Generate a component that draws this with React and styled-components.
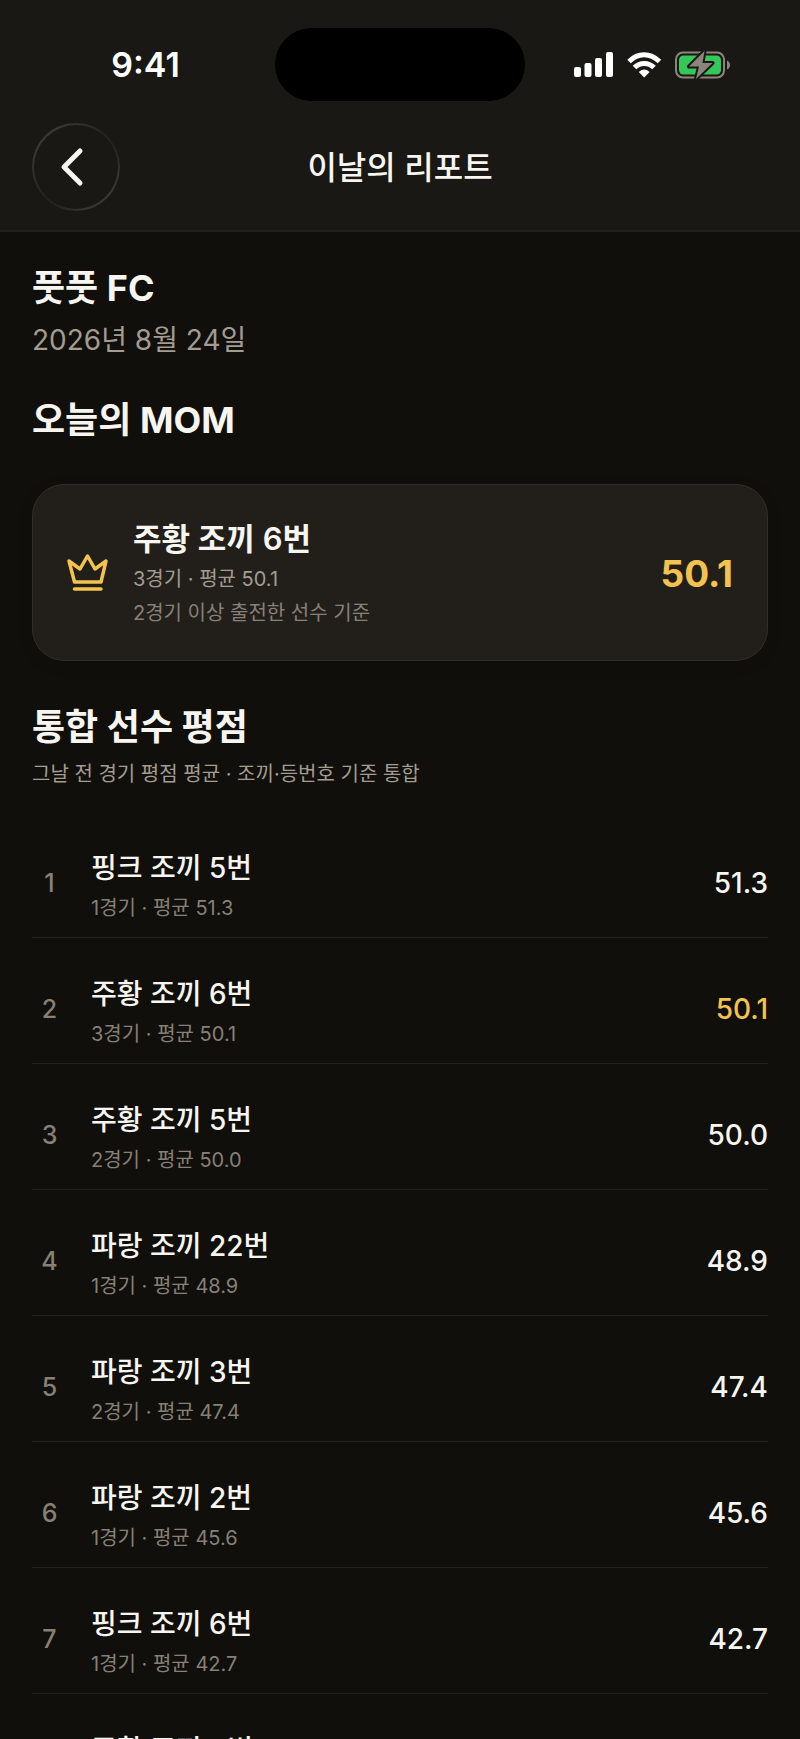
import React from 'react';
import styled, { createGlobalStyle } from 'styled-components';

const players = [
  { name: '핑크 조끼 5번', games: 1, score: '51.3' },
  { name: '주황 조끼 6번', games: 3, score: '50.1', mom: true },
  { name: '주황 조끼 5번', games: 2, score: '50.0' },
  { name: '파랑 조끼 22번', games: 1, score: '48.9' },
  { name: '파랑 조끼 3번', games: 2, score: '47.4' },
  { name: '파랑 조끼 2번', games: 1, score: '45.6' },
  { name: '핑크 조끼 6번', games: 1, score: '42.7' },
  { name: '주황 조끼 4번', games: 1, score: '42.1' },
];

const StatusIcons = () => (
  <Icons viewBox="0 0 160 30" aria-hidden="true">
    <g fill="#fff">
      <rect x="2" y="17" width="7" height="10" rx="2" />
      <rect x="12.500" y="13" width="7" height="14" rx="2" />
      <rect x="23" y="8" width="7" height="19" rx="2" />
      <rect x="34" y="2" width="7" height="25" rx="2" />
    </g>
    <g fill="none" stroke="#fff" strokeWidth="5">
      <path d="M57 11.500 C66 2.500 78 2.500 87.500 11.500" />
      <path d="M62.500 17.500 C68 12 76.500 12 82 17.500" />
    </g>
    <path d="M72.200 27.500 L66.800 22 Q72.200 17.200 77.600 22 Z" fill="#fff" />
    <rect x="104" y="2.500" width="48" height="25" rx="7" fill="none" stroke="#8d857b" strokeWidth="2" />
    <rect x="107" y="5.500" width="42" height="19" rx="4.500" fill="#34c759" />
    <path d="M155 10.500 Q158 12 158 15 Q158 18 155 19.500 Z" fill="#8d857b" />
    <path
      d="M132.500 1 L117 16.500 H127 L124 29 L140.500 13 H130.500 Z"
      fill="#8d857b"
      stroke="#191814"
      strokeWidth="4"
      strokeLinejoin="round"
      paintOrder="stroke"
    />
  </Icons>
);

const App = () => {
  return (
    <Page>
      <GlobalStyle />
      <Header>
        <StatusBar>
          <Time>9:41</Time>
          <Island />
          <StatusIcons />
        </StatusBar>
        <NavBar>
          <BackButton type="button" aria-label="뒤로">
            <svg width="26" height="40" viewBox="0 0 26 40" fill="none">
              <path d="M21 4 L5 20 L21 36" stroke="#f7f5ef" strokeWidth="5" strokeLinecap="round" strokeLinejoin="round" />
            </svg>
          </BackButton>
          <NavTitle>이날의 리포트</NavTitle>
        </NavBar>
      </Header>
      <Content>
        <Heading>풋풋 FC</Heading>
        <DateText>2026년 8월 24일</DateText>
        <Section>
          <Heading>오늘의 MOM</Heading>
          <MomCard>
            <CrownIcon viewBox="0 0 44 44" aria-hidden="true">
              <path d="M4 10 L15 18 L22.500 5 L30 18 L41 10 L36 31 H9.500 Z" />
              <path d="M9.500 38 H36" />
            </CrownIcon>
            <Info>
              <MomName>주황 조끼 6번</MomName>
              <Caption $tone="light">3경기 · 평균 50.1</Caption>
              <Caption>2경기 이상 출전한 선수 기준</Caption>
            </Info>
            <MomScore>50.1</MomScore>
          </MomCard>
        </Section>
        <Section $spaced>
          <Heading>통합 선수 평점</Heading>
          <Note>그날 전 경기 평점 평균 · 조끼·등번호 기준 통합</Note>
          <List>
            {players.map((player, i) => (
              <Row key={player.name}>
                <Rank>{i + 1}</Rank>
                <Info>
                  <Name>{player.name}</Name>
                  <Caption>{player.games}경기 · 평균 {player.score}</Caption>
                </Info>
                <Score $highlight={player.mom}>{player.score}</Score>
              </Row>
            ))}
          </List>
        </Section>
      </Content>
    </Page>
  );
};

const GlobalStyle = createGlobalStyle`
  * {
    box-sizing: border-box;
  }

  body {
    margin: 0;
    background: #100f0b;
  }

  h1, h2, p, ol {
    margin: 0;
    padding: 0;
  }
`;

const Page = styled.div`
  display: flex;
  flex-direction: column;
  height: 100vh;
  overflow: hidden;
  background: #100f0b;
  color: #f7f5ef;
  font-family: Inter, 'Noto Sans CJK KR', sans-serif;
`;

const Header = styled.header`
  flex-shrink: 0;
  padding: 28px 32px 19px;
  background: #191814;
  border-bottom: 2px solid #21201c;
`;

const StatusBar = styled.div`
  display: grid;
  grid-template-columns: 1fr 250px 1fr;
  align-items: center;
`;

const Time = styled.span`
  padding-right: 16px;
  color: #fff;
  font-size: 34px;
  font-weight: 600;
  text-align: center;
`;

const Island = styled.div`
  height: 73px;
  border-radius: 37px;
  background: #000;
`;

const Icons = styled.svg`
  justify-self: end;
  width: 160px;
  height: 30px;
  margin-right: 36px;
`;

const NavBar = styled.div`
  display: grid;
  grid-template-columns: 88px 1fr 88px;
  align-items: center;
  margin-top: 22px;
`;

const BackButton = styled.button`
  display: flex;
  align-items: center;
  justify-content: center;
  width: 88px;
  height: 88px;
  padding: 0 8px 0 0;
  border: 2px solid transparent;
  border-radius: 50%;
  background:
    linear-gradient(#191814, #191814) padding-box,
    linear-gradient(135deg, #48463f, #24231e 45%, #24231e 60%, #48463f) border-box;
  cursor: pointer;
`;

const NavTitle = styled.h1`
  padding-top: 2px;
  font-size: 32px;
  font-weight: 500;
  line-height: 44px;
  text-align: center;
`;

const Content = styled.main`
  padding: 31px 32px 0;
`;

const Section = styled.section`
  margin-top: ${(props) => (props.$spaced ? '41px' : '37px')};
`;

const Heading = styled.h2`
  font-size: 36px;
  font-weight: 700;
  line-height: 50px;
`;

const DateText = styled.p`
  margin-top: 9px;
  color: #a39c91;
  font-size: 28px;
  line-height: 36px;
`;

const MomCard = styled.div`
  display: flex;
  align-items: center;
  gap: 24px;
  margin-top: 39px;
  padding: 31px 34px 30px 32px;
  border: 1px solid #302e29;
  border-radius: 32px;
  background: #221f1b;
  box-shadow: 0 4px 16px rgba(0, 0, 0, 0.12);
`;

const CrownIcon = styled.svg`
  width: 44px;
  height: 44px;
  fill: none;
  stroke: #f2c44f;
  stroke-width: 3.5px;
  stroke-linecap: round;
  stroke-linejoin: round;
`;

const Info = styled.div`
  flex: 1;
  min-width: 0;
`;

const MomName = styled.p`
  font-size: 31px;
  font-weight: 600;
  line-height: 46px;
`;

const Name = styled.p`
  margin-bottom: 2px;
  font-size: 28px;
  font-weight: 500;
  line-height: 42px;
`;

const Caption = styled.p`
  color: ${(props) => (props.$tone === 'light' ? '#a39c91' : '#878076')};
  font-size: 20px;
  line-height: 34px;
`;

const MomScore = styled.strong`
  color: #f2c44f;
  font-size: 37px;
  font-weight: 700;
`;

const Note = styled.p`
  margin-top: 5px;
  color: #a39c91;
  font-size: 20px;
  line-height: 34px;
`;

const List = styled.ol`
  margin-top: 21px;
  list-style: none;
`;

const Row = styled.li`
  display: flex;
  align-items: center;
  gap: 24px;
  padding: 35px 0 12px;
  border-bottom: 1px solid #23221e;
`;

const Rank = styled.span`
  width: 35px;
  padding-bottom: 6px;
  color: #878076;
  font-size: 25px;
  font-weight: 500;
  text-align: center;
`;

const Score = styled.span`
  padding-bottom: 6px;
  color: ${(props) => (props.$highlight ? '#f2c44f' : '#f7f5ef')};
  font-size: 28px;
  font-weight: 500;
`;

export default App;
